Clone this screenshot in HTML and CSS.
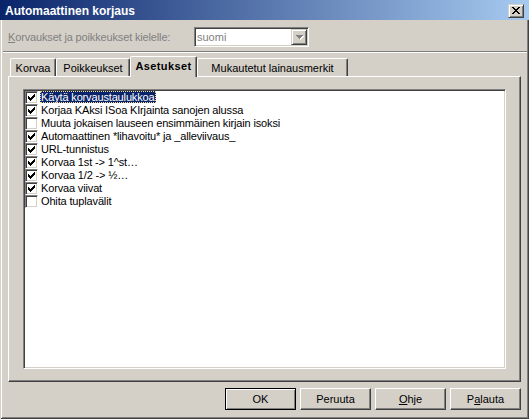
FILE: index.html
```html
<!DOCTYPE html>
<html lang="fi">
<head>
<meta charset="utf-8">
<title>Automaattinen korjaus</title>
<link rel="stylesheet" href="styles.css">
</head>
<body>
<svg width="0" height="0" class="defs">
  <symbol id="check" viewBox="0 0 7 7">
    <rect x="6" y="0" width="1" height="1"/>
    <rect x="5" y="1" width="2" height="1"/>
    <rect x="0" y="2" width="1" height="1"/>
    <rect x="4" y="2" width="3" height="1"/>
    <rect x="0" y="3" width="2" height="1"/>
    <rect x="3" y="3" width="3" height="1"/>
    <rect x="0" y="4" width="5" height="1"/>
    <rect x="1" y="5" width="3" height="1"/>
    <rect x="2" y="6" width="1" height="1"/>
  </symbol>
</svg>
<div class="window">
  <div class="titlebar">
    <span class="title">Automaattinen korjaus</span>
    <div class="close">
      <svg width="8" height="7" viewBox="0 0 8 7" shape-rendering="crispEdges" fill="#000">
        <rect x="0" y="0" width="2" height="1"/><rect x="6" y="0" width="2" height="1"/>
        <rect x="1" y="1" width="2" height="1"/><rect x="5" y="1" width="2" height="1"/>
        <rect x="2" y="2" width="4" height="1"/>
        <rect x="3" y="3" width="2" height="1"/>
        <rect x="2" y="4" width="4" height="1"/>
        <rect x="1" y="5" width="2" height="1"/><rect x="5" y="5" width="2" height="1"/>
        <rect x="0" y="6" width="2" height="1"/><rect x="6" y="6" width="2" height="1"/>
      </svg>
    </div>
  </div>

  <div class="langrow">
    <span class="lang-label"><u>K</u>orvaukset ja poikkeukset kielelle:</span>
    <div class="combo">
      <span class="combo-text">suomi</span>
      <span class="combo-btn">
        <svg width="8" height="5" viewBox="0 0 8 5" shape-rendering="crispEdges">
          <g fill="#fff">
            <rect x="1" y="1" width="7" height="1"/><rect x="2" y="2" width="5" height="1"/>
            <rect x="3" y="3" width="3" height="1"/><rect x="4" y="4" width="1" height="1"/>
          </g>
          <g fill="#808080">
            <rect x="0" y="0" width="7" height="1"/><rect x="1" y="1" width="5" height="1"/>
            <rect x="2" y="2" width="3" height="1"/><rect x="3" y="3" width="1" height="1"/>
          </g>
        </svg>
      </span>
    </div>
  </div>

  <div class="separator"></div>

  <div class="tabs">
    <div class="tab tab-korvaa">Korvaa</div>
    <div class="tab tab-poik">Poikkeukset</div>
    <div class="tab tab-active">Asetukset</div>
    <div class="tab tab-muk">Mukautetut lainausmerkit</div>
  </div>

  <div class="panel">
    <div class="listbox">
      <div class="item"><span class="cb"><svg class="ck"><use href="#check"/></svg></span><span class="lbl sel">Käytä korvaustaulukkoa</span></div>
      <div class="item"><span class="cb"><svg class="ck"><use href="#check"/></svg></span><span class="lbl">Korjaa KAksi ISoa KIrjainta sanojen alussa</span></div>
      <div class="item"><span class="cb"></span><span class="lbl">Muuta jokaisen lauseen ensimmäinen kirjain isoksi</span></div>
      <div class="item"><span class="cb"><svg class="ck"><use href="#check"/></svg></span><span class="lbl">Automaattinen *lihavoitu* ja _alleviivaus_</span></div>
      <div class="item"><span class="cb"><svg class="ck"><use href="#check"/></svg></span><span class="lbl">URL-tunnistus</span></div>
      <div class="item"><span class="cb"><svg class="ck"><use href="#check"/></svg></span><span class="lbl">Korvaa 1st -&gt; 1^st…</span></div>
      <div class="item"><span class="cb"><svg class="ck"><use href="#check"/></svg></span><span class="lbl">Korvaa 1/2 -&gt; ½…</span></div>
      <div class="item"><span class="cb"><svg class="ck"><use href="#check"/></svg></span><span class="lbl">Korvaa viivat</span></div>
      <div class="item"><span class="cb"></span><span class="lbl">Ohita tuplavälit</span></div>
    </div>
  </div>

  <div class="buttons">
    <button class="btn btn-default">OK</button>
    <button class="btn">Peruuta</button>
    <button class="btn"><u>O</u>hje</button>
    <button class="btn">P<u>a</u>lauta</button>
  </div>
</div>
</body>
</html>
```

FILE: styles.css
```css
* { box-sizing: border-box; }
html, body { margin: 0; padding: 0; }
body {
  width: 529px;
  height: 419px;
  overflow: hidden;
  background: #d4d0c8;
  font-family: "Liberation Sans", Arial, sans-serif;
  font-size: 11px;
  color: #000;
}
.defs { position: absolute; width: 0; height: 0; }

.window {
  width: 529px;
  height: 419px;
  background: #d4d0c8;
  display: flex;
  flex-direction: column;
  box-shadow: inset 1px 0 0 #d4d0c8, inset -1px -1px 0 #404040, inset 2px 0 0 #fff, inset -2px -2px 0 #808080;
}

.titlebar {
  flex: none;
  height: 20px;
  display: flex;
  align-items: flex-start;
  justify-content: space-between;
  padding: 0 5px;
  background: linear-gradient(to right, #0a246a, #a6caf0);
}
.title {
  color: #fff;
  font-weight: bold;
  font-size: 12px;
  line-height: 14px;
  margin-top: 4px;
}
.close {
  margin-top: 4px;
  width: 16px;
  height: 14px;
  background: #d4d0c8;
  border: 1px solid;
  border-color: #d4d0c8 #404040 #404040 #d4d0c8;
  box-shadow: inset 1px 1px 0 #fff, inset -1px -1px 0 #808080;
  padding: 2px 0 0 3px;
}
.close svg { display: block; }

.langrow {
  flex: none;
  display: flex;
  align-items: center;
  height: 20px;
  margin-top: 7px;
  padding-left: 8px;
}
.lang-label {
  width: 186px;
  color: #808080;
  letter-spacing: -0.15px;
}
.combo {
  width: 115px;
  height: 20px;
  display: flex;
  background: #fff;
  border: 1px solid;
  border-color: #808080 #fff #fff #808080;
  box-shadow: inset 1px 1px 0 #404040, inset -1px -1px 0 #d4d0c8;
  padding: 1px;
}
.combo-text {
  flex: 1;
  color: #808080;
  padding-left: 1px;
  line-height: 16px;
}
.combo-btn {
  width: 16px;
  height: 16px;
  background: #d4d0c8;
  border: 1px solid;
  border-color: #d4d0c8 #404040 #404040 #d4d0c8;
  box-shadow: inset 1px 1px 0 #fff, inset -1px -1px 0 #808080;
  display: flex;
  align-items: center;
  justify-content: center;
  padding: 1px 0 0 1px;
}
.combo-btn svg { display: block; }

.separator {
  flex: none;
  height: 2px;
  margin: 4px 2px 0 3px;
  border-top: 1px solid #808080;
  border-bottom: 1px solid #fff;
}

.tabs {
  flex: none;
  display: flex;
  align-items: flex-end;
  height: 20px;
  margin-top: 3px;
  padding-left: 10px;
  position: relative;
  z-index: 1;
}
.tab {
  height: 18px;
  border: 1px solid;
  border-bottom: 0;
  border-color: #fff #404040 transparent #fff;
  box-shadow: inset -1px 0 0 #808080;
  border-radius: 2px 2px 0 0;
  text-align: center;
  padding-top: 2px;
  line-height: 14px;
  white-space: nowrap;
}
.tab-korvaa { width: 46px; }
.tab-poik { width: 74px; }
.tab-muk { width: 151px; }
.tab-active {
  width: 67px;
  height: 21px;
  margin-bottom: -1px;
  font-weight: bold;
  letter-spacing: 0.4px;
  background: #d4d0c8;
}

.panel {
  flex: none;
  margin-left: 8px;
  width: 513px;
  height: 306px;
  border: 1px solid;
  border-color: #fff #404040 #404040 #fff;
  box-shadow: inset -1px -1px 0 #808080;
  padding: 12px 13px 11px 14px;
}
.listbox {
  width: 483px;
  height: 280px;
  background: #fff;
  border: 1px solid;
  border-color: #808080 #fff #fff #808080;
  box-shadow: inset 1px 1px 0 #404040, inset -1px -1px 0 #d4d0c8;
  padding: 1px 0 0 1px;
}
.item {
  display: flex;
  align-items: flex-start;
  height: 13px;
}
.cb {
  flex: none;
  width: 13px;
  height: 13px;
  background: #fff;
  border: 1px solid;
  border-color: #808080 #fff #fff #808080;
  box-shadow: inset 1px 1px 0 #404040, inset -1px -1px 0 #d4d0c8;
  padding: 2px;
  margin-right: 2px;
}
.ck {
  display: block;
  width: 7px;
  height: 7px;
  fill: #000;
  shape-rendering: crispEdges;
}
.lbl {
  line-height: 12px;
  height: 12px;
  padding: 0 1px;
  white-space: nowrap;
  letter-spacing: -0.15px;
}
.sel {
  background: #0a246a;
  color: #fff;
  outline: 1px dotted #f5db95;
  outline-offset: -1px;
}

.buttons {
  flex: none;
  display: flex;
  justify-content: flex-end;
  gap: 4px;
  margin-top: 6px;
  padding-right: 8px;
}
.btn {
  appearance: none;
  margin: 0;
  width: 71px;
  height: 22px;
  padding: 0;
  font: inherit;
  color: #000;
  background: #d4d0c8;
  border: 1px solid;
  border-color: #fff #404040 #404040 #fff;
  box-shadow: inset -1px -1px 0 #808080;
  text-align: center;
  line-height: 18px;
}
.btn-default {
  border-color: #000;
  box-shadow: inset 1px 1px 0 #fff, inset -1px -1px 0 #808080;
}
```
